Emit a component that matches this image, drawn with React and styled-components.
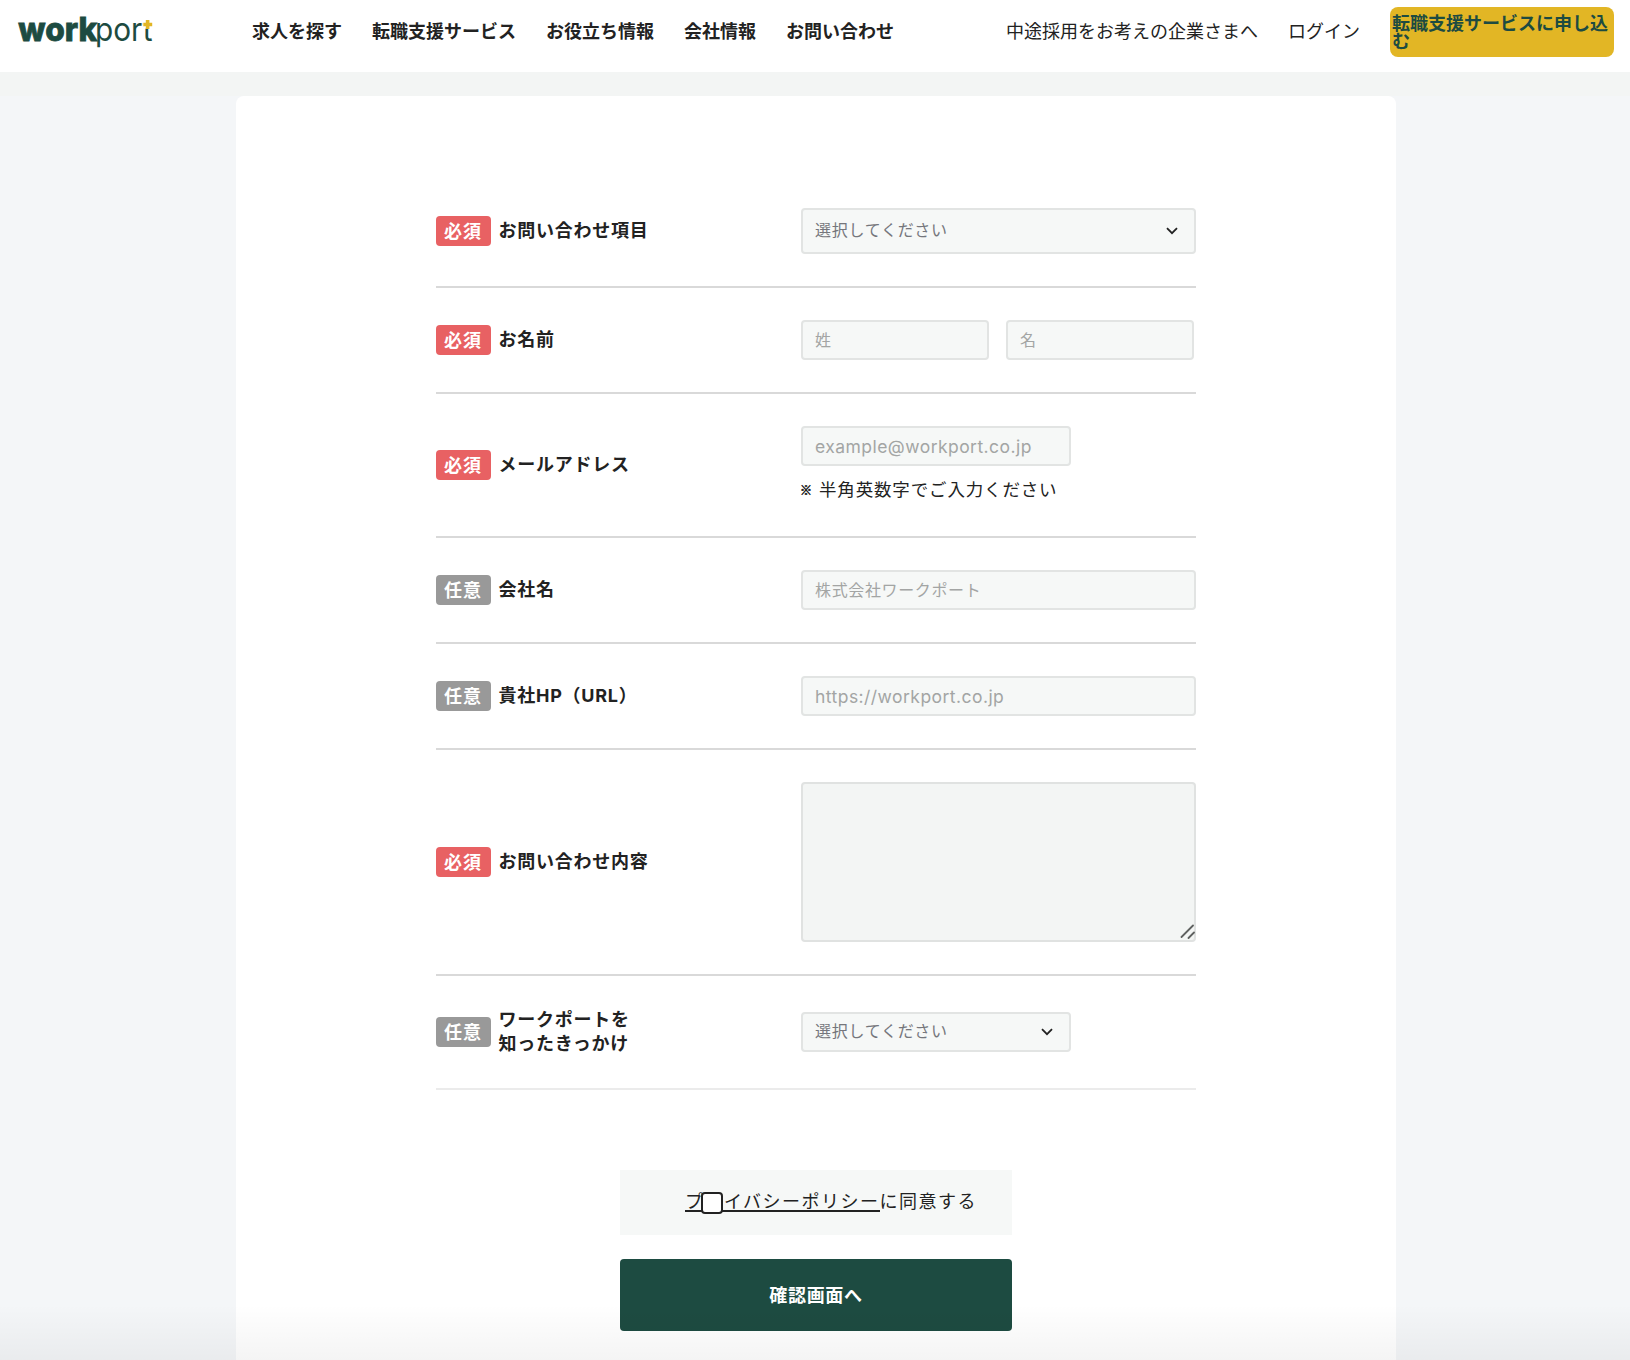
import React, { useState } from "react";
import styled, { createGlobalStyle } from "styled-components";

const GlobalStyle = createGlobalStyle`
  *, *::before, *::after {
    box-sizing: border-box;
  }
  body {
    margin: 0;
    background-color: #f4f6f8;
    color: #222;
    font-family: "Inter", "Noto Sans CJK JP", sans-serif;
    font-size: 18px;
    overflow: hidden;
  }
`;

const StyledPage = styled.div`
  position: relative;
  height: 1360px;
  overflow: hidden;
`;

const StyledHeader = styled.header`
  display: flex;
  align-items: flex-start;
  height: 72px;
  padding: 7px 16px 0 18px;
  background-color: #fff;
`;

const StyledLogo = styled.svg`
  display: block;
  flex: none;
  width: 140px;
  height: 50px;
  margin-right: 94px;
  overflow: visible;
`;

const StyledNav = styled.nav`
  display: flex;
  gap: 30px;
  margin-left: ${({ $right }) => ($right ? "auto" : "0")};
  margin-right: ${({ $right }) => ($right ? "30px" : "0")};
`;

const StyledNavLink = styled.a`
  color: #222;
  font-family: "Noto Sans CJK JP", sans-serif;
  font-weight: ${({ $bold }) => ($bold ? 700 : 400)};
  line-height: 46px;
  white-space: nowrap;
`;

const StyledApplyButton = styled.a`
  flex: none;
  width: 224px;
  height: 50px;
  padding: 6px 2px;
  border-radius: 8px;
  background-color: #e2b625;
  color: #1d4b41;
  font-family: "Noto Sans CJK JP", sans-serif;
  font-weight: 700;
  line-height: 18px;
`;

const StyledBand = styled.div`
  height: 24px;
  background-color: #f3f5f4;
`;

const StyledPanel = styled.main`
  width: 1160px;
  min-height: 1264px;
  margin-left: 236px;
  padding: 80px 200px 0;
  border-radius: 8px 8px 0 0;
  background-color: #fff;
`;

const StyledRow = styled.div`
  display: flex;
  align-items: center;
  padding: 32px 0;
  border-bottom: 2px solid ${({ $last }) => ($last ? "#ebebeb" : "#d9d9d9")};
`;

const StyledRowHead = styled.div`
  display: flex;
  align-items: center;
  gap: 7.5px;
  width: 365px;
`;

const StyledBadge = styled.span`
  width: 55px;
  height: 30px;
  padding-left: 8px;
  border-radius: 4px;
  background-color: ${({ $required }) => ($required ? "#e86163" : "#999")};
  color: #fff;
  font-weight: 700;
  line-height: 31px;
  letter-spacing: 0.05em;
  white-space: nowrap;
`;

const StyledLabel = styled.label`
  font-weight: 700;
  line-height: 24px;
  letter-spacing: 0.041em;
  white-space: pre-line;
`;

const StyledRowBody = styled.div`
  display: flex;
  flex-wrap: wrap;
  gap: 0 17px;
  width: 395px;
`;

const StyledInput = styled.input`
  width: ${({ $width }) => $width || 395}px;
  height: 40px;
  padding: 0 12px;
  border: 2px solid #e2e4e3;
  border-radius: 4px;
  outline: none;
  background-color: #f6f8f7;
  color: #222;
  font-family: inherit;
  font-size: ${({ $latin }) => ($latin ? 17.5 : 16)}px;
  letter-spacing: ${({ $latin }) => ($latin ? 0.026 : 0.04)}em;
  &::placeholder {
    color: #a3a5a4;
    opacity: 1;
  }
`;

const StyledSelectWrap = styled.div`
  position: relative;
  width: ${({ $width }) => $width || 395}px;
`;

const StyledSelect = styled.select`
  display: block;
  width: 100%;
  height: ${({ $height }) => $height || 40}px;
  padding: 0 12px 2px;
  border: 2px solid #e2e4e3;
  border-radius: 4px;
  outline: none;
  appearance: none;
  background-color: #f6f8f7;
  color: #75767c;
  font-family: inherit;
  font-size: 16px;
  letter-spacing: 0.045em;
`;

const StyledChevron = styled.svg`
  position: absolute;
  top: 50%;
  right: 18px;
  width: 12px;
  height: 8px;
  margin-top: -4px;
  pointer-events: none;
`;

const StyledTextareaWrap = styled.div`
  position: relative;
  width: 395px;
  height: 160px;
`;

const StyledTextarea = styled.textarea`
  display: block;
  width: 100%;
  height: 100%;
  padding: 12px;
  border: 2px solid #e0e2e1;
  border-radius: 4px;
  outline: none;
  resize: none;
  background-color: #f3f5f4;
  font-family: inherit;
  font-size: 16px;
`;

const StyledGrip = styled.svg`
  position: absolute;
  right: 1px;
  bottom: 3px;
  width: 15px;
  height: 15px;
`;

const StyledNote = styled.p`
  display: flex;
  width: 100%;
  height: 38px;
  margin: 0;
  padding-top: 12px;
  font-size: 17.5px;
  line-height: 23px;
  letter-spacing: 0.048em;
`;

const StyledNoteMark = styled.span`
  width: 18px;
  font-family: "Noto Sans CJK JP", sans-serif;
  font-size: 12px;
  font-weight: 900;
  letter-spacing: 0;
  text-indent: -1px;
  -webkit-text-stroke: 0.6px #222;
`;

const StyledConsent = styled.div`
  position: relative;
  display: flex;
  align-items: flex-start;
  width: 392px;
  height: 65px;
  margin: 80px auto 0;
  padding: 20px 0 0 65px;
  background-color: #f6f8f7;
  letter-spacing: 0.0825em;
  line-height: 24px;
  white-space: nowrap;
`;

const StyledPolicyLink = styled.a`
  height: 22px;
  border-bottom: 2px solid #222;
  color: #222;
`;

// The box is floated over the link text
const StyledCheckbox = styled.input`
  position: absolute;
  top: 22px;
  left: 81px;
  width: 22px;
  height: 22px;
  margin: 0;
  border: 2px solid #222;
  border-radius: 4px;
  appearance: none;
  background-color: ${({ checked }) => (checked ? "#1d4b41" : "#fff")};
`;

const StyledSubmit = styled.button`
  display: block;
  width: 392px;
  height: 72px;
  margin: 24px auto 0;
  padding: 0 0 2px;
  border: none;
  border-radius: 4px;
  background-color: #1d4b41;
  color: #fff;
  font-family: inherit;
  font-size: 18px;
  font-weight: 700;
  letter-spacing: 0.04em;
  cursor: pointer;
`;

const StyledBottomShade = styled.div`
  position: absolute;
  right: 0;
  bottom: 0;
  left: 0;
  height: 56px;
  background: linear-gradient(rgba(0, 0, 0, 0), rgba(0, 0, 0, 0.045));
  pointer-events: none;
`;

const mainLinks = [
  "求人を探す",
  "転職支援サービス",
  "お役立ち情報",
  "会社情報",
  "お問い合わせ",
];
const subLinks = ["中途採用をお考えの企業さまへ", "ログイン"];

const Logo = () => (
  <StyledLogo viewBox="18 7 140 50" fontFamily="Inter, sans-serif" fill="#1d4b41">
    <text
      x="18.3"
      y="41.3"
      fontSize="33"
      fontWeight="800"
      textLength="79"
      lengthAdjust="spacingAndGlyphs"
      stroke="#1d4b41"
      strokeWidth="0.8"
    >
      work
    </text>
    <text
      x="95"
      y="41.3"
      fontSize="33"
      fontWeight="400"
      textLength="57.5"
      lengthAdjust="spacingAndGlyphs"
    >
      port
    </text>
    <path d="M142.8 15h11v13.7h-11z" fill="#fff" />
    <path d="M143.3 22.7h2.5V20h3.6v2.7h2.8v3.5h-2.8V29h-3.6v-2.8h-2.5z" fill="#e2b625" />
  </StyledLogo>
);

const Chevron = () => (
  <StyledChevron viewBox="0 0 12 8">
    <path d="M1 1.2l5 5 5-5" fill="none" stroke="#222" strokeWidth="1.8" />
  </StyledChevron>
);

const FormRow = ({ label, required, last, children }) => (
  <StyledRow $last={last}>
    <StyledRowHead>
      <StyledBadge $required={required}>{required ? "必須" : "任意"}</StyledBadge>
      <StyledLabel>{label}</StyledLabel>
    </StyledRowHead>
    <StyledRowBody>{children}</StyledRowBody>
  </StyledRow>
);

const SelectBox = ({ width, height }) => (
  <StyledSelectWrap $width={width}>
    <StyledSelect $height={height} defaultValue="">
      <option value="">選択してください</option>
    </StyledSelect>
    <Chevron />
  </StyledSelectWrap>
);

const App = () => {
  const [isAgreed, setIsAgreed] = useState(false);

  return (
    <>
      <GlobalStyle />
      <StyledPage>
        <StyledHeader>
          <Logo />
          <StyledNav>
            {mainLinks.map((text) => (
              <StyledNavLink key={text} $bold>
                {text}
              </StyledNavLink>
            ))}
          </StyledNav>
          <StyledNav $right>
            {subLinks.map((text) => (
              <StyledNavLink key={text}>{text}</StyledNavLink>
            ))}
          </StyledNav>
          <StyledApplyButton>転職支援サービスに申し込む</StyledApplyButton>
        </StyledHeader>
        <StyledBand />
        <StyledPanel>
          <FormRow label="お問い合わせ項目" required>
            <SelectBox height={46} />
          </FormRow>
          <FormRow label="お名前" required>
            <StyledInput $width={188} placeholder="姓" />
            <StyledInput $width={188} placeholder="名" />
          </FormRow>
          <FormRow label="メールアドレス" required>
            <StyledInput $width={270} $latin placeholder="example@workport.co.jp" />
            <StyledNote>
              <StyledNoteMark>※</StyledNoteMark>
              半角英数字でご入力ください
            </StyledNote>
          </FormRow>
          <FormRow label="会社名">
            <StyledInput placeholder="株式会社ワークポート" />
          </FormRow>
          <FormRow label="貴社HP（URL）">
            <StyledInput $latin placeholder="https://workport.co.jp" />
          </FormRow>
          <FormRow label="お問い合わせ内容" required>
            <StyledTextareaWrap>
              <StyledTextarea />
              <StyledGrip viewBox="0 0 15 15">
                <path d="M1.5 13L13 1.5M8.5 14L14 8.5" stroke="#5f6160" strokeWidth="1.8" strokeLinecap="round" />
              </StyledGrip>
            </StyledTextareaWrap>
          </FormRow>
          <FormRow label={"ワークポートを\n知ったきっかけ"} last>
            <SelectBox width={270} />
          </FormRow>
          <StyledConsent>
            <StyledPolicyLink>プライバシーポリシー</StyledPolicyLink>
            <span>に同意する</span>
            <StyledCheckbox
              type="checkbox"
              checked={isAgreed}
              onChange={(e) => setIsAgreed(e.target.checked)}
            />
          </StyledConsent>
          <StyledSubmit type="button">確認画面へ</StyledSubmit>
        </StyledPanel>
        <StyledBottomShade />
      </StyledPage>
    </>
  );
};

export default App;
